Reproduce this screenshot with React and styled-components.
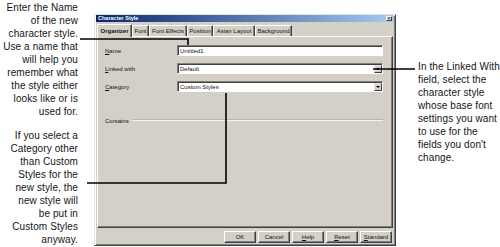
import styled, { createGlobalStyle } from 'styled-components';

const GlobalStyle = createGlobalStyle`
  html, body {
    margin: 0;
    padding: 0;
    background: #fff;
  }
  body {
    font-family: "Liberation Sans", Arial, sans-serif;
  }
`;

const Page = styled.div`
  position: relative;
  display: flex;
  width: 500px;
  height: 247px;
  overflow: hidden;
  background: #fff;
`;

const LeftNotes = styled.div`
  width: 78px;
  flex-shrink: 0;
  display: flex;
  flex-direction: column;
  align-items: flex-end;
  gap: 11px;
  padding-top: 1px;
`;

const Note = styled.p`
  margin: 0;
  font-size: 10px;
  line-height: 13px;
  letter-spacing: 0.1px;
  color: #141414;
  white-space: nowrap;
  text-align: ${(p) => (p.$right ? 'right' : 'left')};
`;

const RightNotes = styled.div`
  margin-left: 22px;
  padding-top: 60px;
`;

const Dialog = styled.div`
  margin: 14px 0 0 16px;
  width: 302px;
  height: 232px;
  flex-shrink: 0;
  box-sizing: border-box;
  display: flex;
  flex-direction: column;
  padding: 0 2px 2px;
  background: #d4d0c8;
  border: 1px solid;
  border-color: #e4e2dc #404040 #404040 #e4e2dc;
  box-shadow: inset 1px 1px 0 #fff, inset -1px -1px 0 #808080;
  font-family: "Liberation Sans", Arial, sans-serif;
  font-size: 6px;
  color: #111;
`;

const TitleBar = styled.div`
  height: 7px;
  margin: 0 -1px;
  display: flex;
  align-items: center;
  justify-content: space-between;
  padding: 0 2px;
  background: linear-gradient(to right, #0a246a, #a6caf0);
`;

const Title = styled.span`
  color: #fff;
  font-weight: bold;
  font-size: 5.5px;
  line-height: 7px;
`;

const CloseBox = styled.span`
  width: 6px;
  height: 5px;
  box-sizing: border-box;
  background: #d4d0c8;
  border: 1px solid;
  border-color: #fff #404040 #404040 #fff;
  font-size: 5px;
  line-height: 3px;
  text-align: center;
  color: #000;
`;

const TabStrip = styled.div`
  height: 13px;
  margin-top: 1px;
  display: flex;
  align-items: flex-end;
`;

const Tab = styled.div`
  width: ${(p) => p.$w}px;
  height: ${(p) => (p.$active ? 13 : 11)}px;
  box-sizing: border-box;
  display: flex;
  align-items: center;
  justify-content: center;
  border-top: 1px solid #fff;
  border-left: 1px solid #fff;
  border-right: 1px solid #404040;
  box-shadow: inset -1px 0 0 #808080;
  font-size: 6px;
  font-weight: ${(p) => (p.$active ? 'bold' : 'normal')};
  white-space: nowrap;
  margin-bottom: ${(p) => (p.$active ? -1 : 0)}px;
  background: #d4d0c8;
  position: ${(p) => (p.$active ? 'relative' : 'static')};
  z-index: ${(p) => (p.$active ? 1 : 0)};
`;

const Panel = styled.div`
  height: 192px;
  box-sizing: border-box;
  padding: 8px 9px 0 7px;
  border: 1px solid;
  border-color: #fff #404040 #404040 #fff;
  box-shadow: inset -1px -1px 0 #808080;
  display: flex;
  flex-direction: column;
  gap: 7px;
`;

const Row = styled.div`
  display: flex;
  align-items: center;
  height: 11px;
`;

const Label = styled.span`
  width: 72px;
  flex-shrink: 0;
  font-size: 6px;
`;

const Field = styled.div`
  flex: 1;
  height: 11px;
  box-sizing: border-box;
  display: flex;
  align-items: center;
  background: #fff;
  border: 1px solid;
  border-color: #808080 #fff #fff #808080;
  box-shadow: inset 1px 1px 0 #404040;
  padding-left: 2px;
  font-size: 6px;
`;

const FieldText = styled.span`
  flex: 1;
`;

const DropButton = styled.span`
  width: 8px;
  height: 8px;
  box-sizing: border-box;
  display: flex;
  align-items: center;
  justify-content: center;
  background: #d4d0c8;
  border: 1px solid;
  border-color: #e8e6e0 #404040 #404040 #e8e6e0;

  &::after {
    content: '';
    border-left: 2px solid transparent;
    border-right: 2px solid transparent;
    border-top: 2px solid #000;
  }
`;

const Group = styled.div`
  margin-top: 19px;
  display: flex;
  align-items: flex-start;
  gap: 3px;
`;

const GroupLine = styled.div`
  flex: 1;
  margin-top: 1px;
  border-top: 1px solid #b8b4aa;
  border-bottom: 1px solid #f4f2ee;
`;

const ButtonRow = styled.div`
  margin-top: 3px;
  padding-right: 1px;
  display: flex;
  justify-content: flex-end;
  gap: 2px;
`;

const Button = styled.div`
  width: 32px;
  height: 12px;
  box-sizing: border-box;
  display: flex;
  align-items: center;
  justify-content: center;
  border: 1px solid;
  border-color: #fff #404040 #404040 #fff;
  box-shadow: inset -1px -1px 0 #808080;
  font-size: 6px;
`;

const Leaders = styled.svg`
  position: absolute;
  top: 0;
  left: 0;
  pointer-events: none;
`;

export default function App() {
  return (
    <>
      <GlobalStyle />
      <Page>
        <LeftNotes>
          <Note $right>
            Enter the Name<br />
            of the new<br />
            character style.<br />
            Use a name that<br />
            will help you<br />
            remember what<br />
            the style either<br />
            looks like or is<br />
            used for.
          </Note>
          <Note $right>
            If you select a<br />
            Category other<br />
            than Custom<br />
            Styles for the<br />
            new style, the<br />
            new style will<br />
            be put in<br />
            Custom Styles<br />
            anyway.
          </Note>
        </LeftNotes>

        <Dialog>
          <TitleBar>
            <Title>Character Style</Title>
            <CloseBox>×</CloseBox>
          </TitleBar>
          <TabStrip>
            <Tab $w={35} $active>Organizer</Tab>
            <Tab $w={17}>Font</Tab>
            <Tab $w={38}>Font Effects</Tab>
            <Tab $w={26}>Position</Tab>
            <Tab $w={42}>Asian Layout</Tab>
            <Tab $w={37}>Background</Tab>
          </TabStrip>
          <Panel>
            <Row>
              <Label><u>N</u>ame</Label>
              <Field><FieldText>Untitled1</FieldText></Field>
            </Row>
            <Row>
              <Label><u>L</u>inked with</Label>
              <Field>
                <FieldText>Default</FieldText>
                <DropButton />
              </Field>
            </Row>
            <Row>
              <Label><u>C</u>ategory</Label>
              <Field>
                <FieldText>Custom Styles</FieldText>
                <DropButton />
              </Field>
            </Row>
            <Group>
              <span>Contains</span>
              <GroupLine />
            </Group>
          </Panel>
          <ButtonRow>
            <Button>OK</Button>
            <Button>Cancel</Button>
            <Button><u>H</u>elp</Button>
            <Button><u>R</u>eset</Button>
            <Button><u>S</u>tandard</Button>
          </ButtonRow>
        </Dialog>

        <RightNotes>
          <Note>
            In the Linked With<br />
            field, select the<br />
            character style<br />
            whose base font<br />
            settings you want<br />
            to use for the<br />
            fields you don't<br />
            change.
          </Note>
        </RightNotes>

        <Leaders width="500" height="247" viewBox="0 0 500 247">
          <g fill="none" stroke="#000" strokeWidth="1.6">
            <path d="M80 39 H188 V45" />
            <path d="M373 69 H415" />
            <path d="M87 183 H226 V93" />
          </g>
        </Leaders>
      </Page>
    </>
  );
}
